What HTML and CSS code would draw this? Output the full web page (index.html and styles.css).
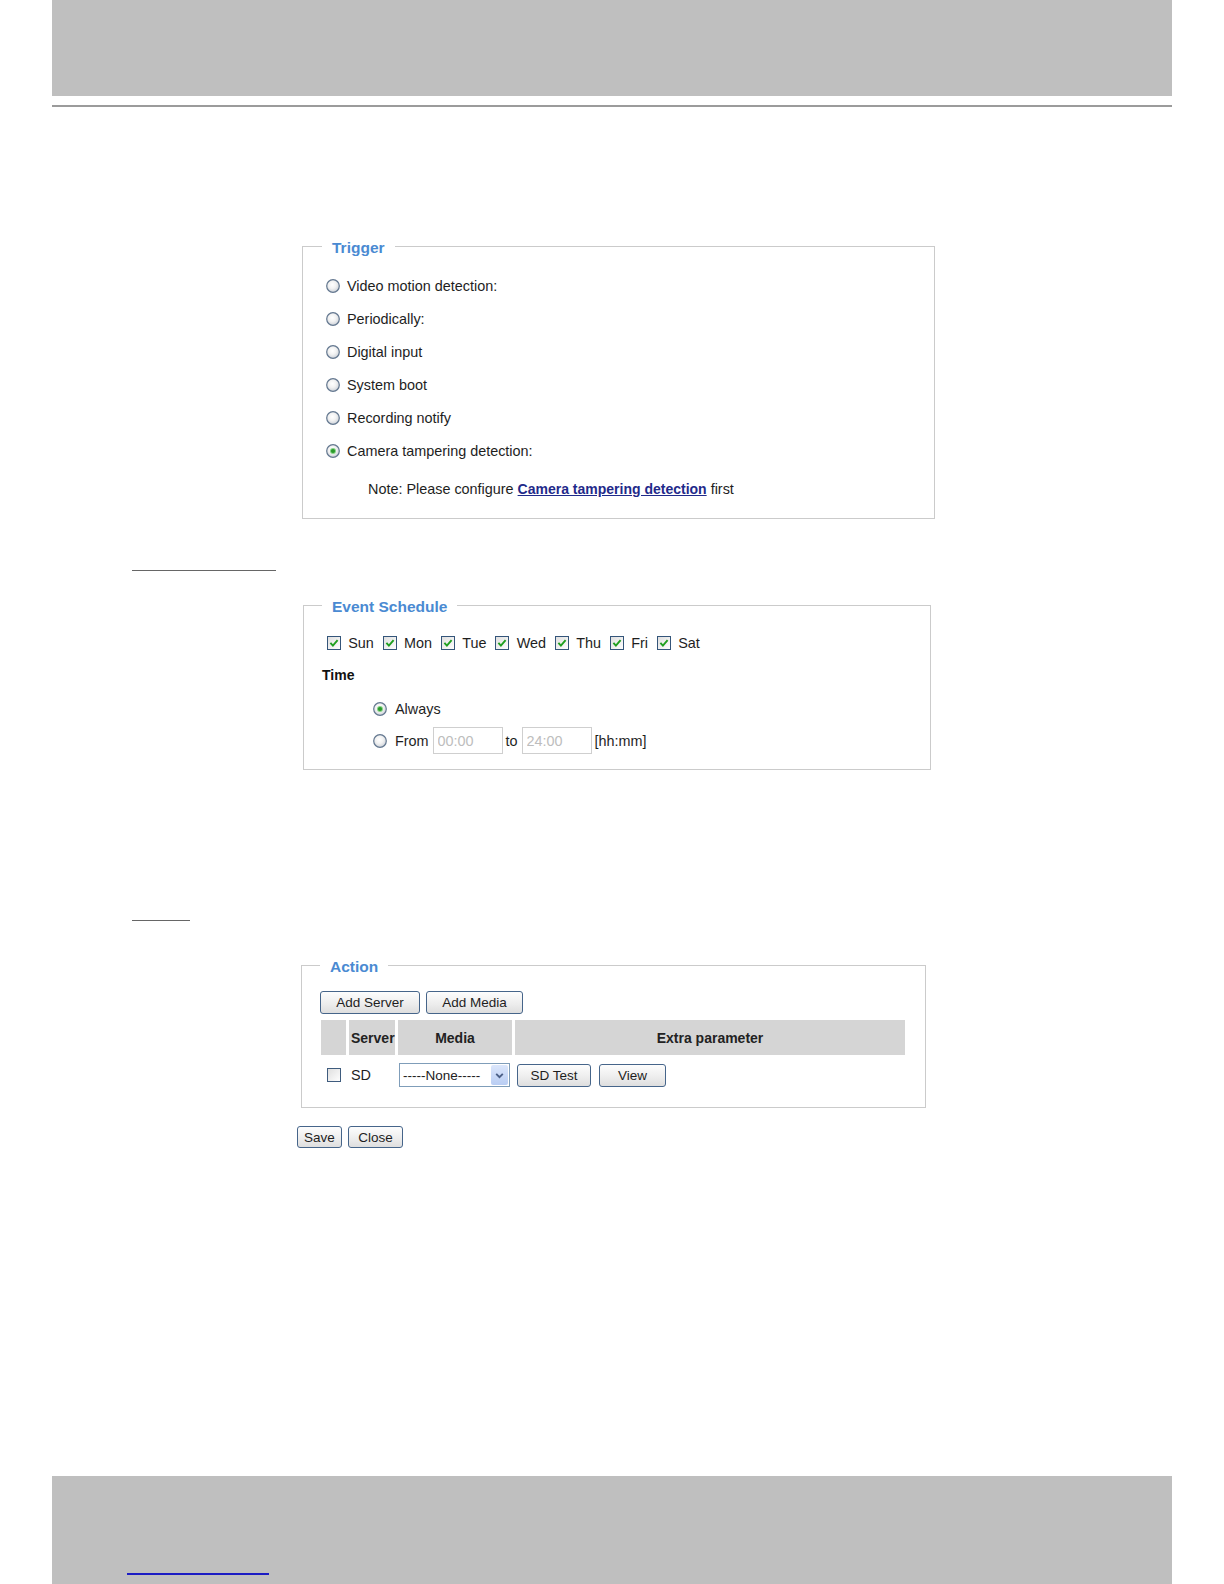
FILE: index.html
```html
<!DOCTYPE html>
<html lang="en">
<head>
    <meta charset="UTF-8">
    <meta name="viewport" content="width=device-width, initial-scale=1.0">
    <title>Event Settings</title>
    <link rel="stylesheet" href="styles.css">
</head>
<body>
    <!-- shared icon symbols -->
    <svg class="sprite" aria-hidden="true">
        <defs>
            <radialGradient id="radio-fill" cx="45%" cy="40%" r="60%">
                <stop offset="0" stop-color="#ffffff"/>
                <stop offset="0.5" stop-color="#f2f2f2"/>
                <stop offset="1" stop-color="#cdd2d9"/>
            </radialGradient>
            <linearGradient id="box-fill" x1="0" y1="0" x2="1" y2="1">
                <stop offset="0" stop-color="#dedede"/>
                <stop offset="1" stop-color="#ffffff"/>
            </linearGradient>
            <symbol id="radio-off" viewBox="0 0 14 14">
                <circle cx="7" cy="7" r="6.3" fill="url(#radio-fill)" stroke="#63778f" stroke-width="1.2"/>
            </symbol>
            <symbol id="radio-on" viewBox="0 0 14 14">
                <circle cx="7" cy="7" r="6.3" fill="url(#radio-fill)" stroke="#63778f" stroke-width="1.2"/>
                <circle cx="7" cy="7" r="3" fill="#86d386"/>
                <circle cx="7" cy="7" r="2.1" fill="#2a9a2a"/>
            </symbol>
            <symbol id="check-on" viewBox="0 0 14 14">
                <rect x="0.5" y="0.5" width="13" height="13" fill="url(#box-fill)" stroke="#34557a"/>
                <path d="M3.4 6.9 L5.9 9.6 L10.6 4.2" fill="none" stroke="#1f9f1f" stroke-width="1.9"/>
            </symbol>
            <symbol id="check-off" viewBox="0 0 14 14">
                <rect x="0.5" y="0.5" width="13" height="13" fill="url(#box-fill)" stroke="#3f5c7e"/>
            </symbol>
        </defs>
    </svg>

    <header class="page-head"></header>
    <div class="head-rule"></div>

    <main class="content">
        <fieldset class="box box-trigger">
            <legend>Trigger</legend>
            <ul class="trigger-list">
                <li><svg class="radio"><use href="#radio-off"/></svg>Video motion detection:</li>
                <li><svg class="radio"><use href="#radio-off"/></svg>Periodically:</li>
                <li><svg class="radio"><use href="#radio-off"/></svg>Digital input</li>
                <li><svg class="radio"><use href="#radio-off"/></svg>System boot</li>
                <li><svg class="radio"><use href="#radio-off"/></svg>Recording notify</li>
                <li><svg class="radio"><use href="#radio-on"/></svg>Camera tampering detection:</li>
            </ul>
            <p class="note">Note: Please configure <a href="#">Camera tampering detection</a> first</p>
        </fieldset>

        <div class="section-rule section-rule-schedule"></div>

        <fieldset class="box box-schedule">
            <legend>Event Schedule</legend>
            <div class="days">
                <span class="day"><svg class="check"><use href="#check-on"/></svg>Sun</span>
                <span class="day"><svg class="check"><use href="#check-on"/></svg>Mon</span>
                <span class="day"><svg class="check"><use href="#check-on"/></svg>Tue</span>
                <span class="day"><svg class="check"><use href="#check-on"/></svg>Wed</span>
                <span class="day"><svg class="check"><use href="#check-on"/></svg>Thu</span>
                <span class="day"><svg class="check"><use href="#check-on"/></svg>Fri</span>
                <span class="day"><svg class="check"><use href="#check-on"/></svg>Sat</span>
            </div>
            <div class="time-title">Time</div>
            <div class="time-opt">
                <svg class="radio"><use href="#radio-on"/></svg>Always
            </div>
            <div class="time-opt time-range">
                <svg class="radio"><use href="#radio-off"/></svg>From
                <input class="time-input" type="text" value="00:00" readonly>
                to
                <input class="time-input" type="text" value="24:00" readonly>
                [hh:mm]
            </div>
        </fieldset>

        <div class="section-rule section-rule-action"></div>

        <fieldset class="box box-action">
            <legend>Action</legend>
            <div class="btn-row">
                <button class="btn btn-server">Add Server</button>
                <button class="btn btn-media">Add Media</button>
            </div>
            <table class="media-table">
                <colgroup>
                    <col class="col-check">
                    <col class="col-server">
                    <col class="col-media">
                    <col class="col-extra">
                </colgroup>
                <thead>
                    <tr>
                        <th></th>
                        <th class="th-server">Server</th>
                        <th>Media</th>
                        <th>Extra parameter</th>
                    </tr>
                </thead>
                <tbody>
                    <tr>
                        <td class="td-check"><svg class="check"><use href="#check-off"/></svg></td>
                        <td class="td-server">SD</td>
                        <td class="td-media">
                            <div class="select-box">
                                <select>
                                    <option>-----None-----</option>
                                </select>
                                <span class="select-arrow">
                                    <svg viewBox="0 0 10 10"><path d="M2 3.5 L5 6.5 L8 3.5" fill="none" stroke="#4b5f86" stroke-width="1.7"/></svg>
                                </span>
                            </div>
                        </td>
                        <td class="td-extra">
                            <button class="btn btn-test">SD Test</button>
                            <button class="btn btn-view">View</button>
                        </td>
                    </tr>
                </tbody>
            </table>
        </fieldset>

        <div class="form-actions">
            <button class="btn btn-small btn-save">Save</button>
            <button class="btn btn-small btn-close">Close</button>
        </div>
    </main>

    <footer class="page-foot">
        <span class="foot-link"></span>
    </footer>
</body>
</html>
```

FILE: styles.css
```css
body {
    margin: 0;
    min-height: 100vh;
    display: flex;
    flex-direction: column;
    font-family: 'Liberation Sans', Arial, sans-serif;
    font-size: 14.4px;
    color: #1e1e1e;
    background-color: #fff;
}
.sprite {
    display: block;
    width: 0;
    height: 0;
    overflow: hidden;
}

/* page frame */
.page-head {
    height: 96px;
    margin: 0 52px;
    background-color: #bfbfbf;
}
.head-rule {
    margin: 9px 52px 0;
    border-top: 2px solid #9b9b9b;
}
.page-foot {
    margin: auto 52px 0;
    height: 108px;
    background-color: #bfbfbf;
    display: flex;
    align-items: flex-end;
}
.foot-link {
    width: 142px;
    margin: 0 0 9px 75px;
    border-bottom: 2px solid #1c1cc4;
}

/* fieldsets */
.box {
    box-sizing: border-box;
    margin: 0;
    border: 1px solid #cbcbcb;
    min-width: 0;
}
.box legend {
    padding: 3px 10px 0;
    line-height: 17px;
    font-size: 15.5px;
    font-weight: bold;
    color: #4a8ad2;
}
.box-trigger {
    width: 633px;
    margin: 129px 0 0 302px;
    padding: 13px 10px 12px 19px;
}
.box-schedule {
    width: 628px;
    margin: 24px 0 0 303px;
    padding: 16px 10px 15px 18px;
}
.box-action {
    width: 625px;
    margin: 34px 0 0 301px;
    padding: 16px 10px 12px 18px;
}

.section-rule {
    border-top: 1px solid #666;
    margin-left: 132px;
}
.section-rule-schedule {
    width: 144px;
    margin-top: 51px;
}
.section-rule-action {
    width: 58px;
    margin-top: 150px;
}

/* icons */
.radio, .check {
    width: 14px;
    height: 14px;
    flex: none;
}

/* trigger */
.trigger-list {
    list-style: none;
    margin: 0 0 0 4px;
    padding: 0;
}
.trigger-list li {
    display: flex;
    align-items: center;
    height: 33px;
}
.trigger-list .radio {
    margin-right: 7px;
}
.note {
    margin: 6px 0 0 46px;
    line-height: 33px;
}
.note a {
    color: #1f2a8a;
    font-size: 14px;
    font-weight: bold;
}

/* schedule */
.days {
    display: flex;
    align-items: center;
    height: 24px;
    margin-left: 5px;
}
.day {
    display: flex;
    align-items: center;
    margin-right: 9px;
}
.day .check {
    margin-right: 7.2px;
}
.time-title {
    margin-top: 8px;
    line-height: 24px;
    font-size: 14px;
    font-weight: bold;
    color: #111;
}
.time-opt {
    display: flex;
    align-items: center;
    height: 24px;
    margin: 10px 0 0 51px;
}
.time-opt .radio {
    margin-right: 8px;
}
.time-range {
    height: 27px;
    margin-top: 6px;
}
.time-input {
    box-sizing: border-box;
    width: 70px;
    height: 27px;
    margin: 0 3px 0 4px;
    padding: 0 4px;
    border: 1px solid #cfcfcf;
    font-family: inherit;
    font-size: 14.4px;
    color: #bdbdbd;
    outline: none;
}

/* buttons */
.btn {
    box-sizing: border-box;
    height: 23px;
    padding: 0;
    border: 1px solid #46658a;
    border-radius: 3px;
    background: linear-gradient(#fdfdfd, #ececec 60%, #dedede);
    font-family: 'Liberation Sans', Arial, sans-serif;
    font-size: 13.5px;
    color: #1e1e1e;
    text-align: center;
}
.btn-small {
    height: 22px;
}
.btn-server { width: 100px; }
.btn-media { width: 97px; }
.btn-test { width: 74px; }
.btn-view { width: 67px; margin-left: 4px; }
.btn-save { width: 45px; }
.btn-close { width: 55px; }

.btn-row {
    display: flex;
    gap: 6px;
}

/* action table */
.media-table {
    width: 590px;
    margin: 3px 0 0 -2px;
    border-spacing: 3px;
    table-layout: fixed;
}
.col-check { width: 25px; }
.col-server { width: 46px; }
.col-media { width: 114px; }
.media-table th {
    height: 35px;
    padding: 0;
    background-color: #d5d5d5;
    font-size: 14px;
    font-weight: bold;
    color: #222;
}
.media-table th.th-server {
    text-align: left;
    padding-left: 2px;
}
.media-table td {
    height: 34px;
    padding: 0;
    vertical-align: middle;
}
.td-check {
    text-align: center;
}
.td-check .check {
    display: block;
    margin: 0 auto;
}
.media-table .td-server {
    padding-left: 2px;
}
.media-table .td-media {
    padding-left: 1px;
}
.media-table .td-extra {
    padding-left: 2px;
}

.select-box {
    position: relative;
    width: 111px;
    height: 24px;
}
.select-box select {
    appearance: none;
    box-sizing: border-box;
    width: 100%;
    height: 100%;
    margin: 0;
    padding: 0 0 0 3px;
    border: 1px solid #7f9db9;
    border-radius: 0;
    background-color: #fff;
    font-family: 'Liberation Sans', Arial, sans-serif;
    font-size: 13.5px;
    color: #222;
}
.select-arrow {
    position: absolute;
    top: 2px;
    right: 2px;
    width: 17px;
    height: 20px;
    display: flex;
    align-items: center;
    justify-content: center;
    background: linear-gradient(#dbe6fb, #b9cdf3);
    border-radius: 2px;
    pointer-events: none;
}
.select-arrow svg {
    width: 11px;
    height: 11px;
}

.form-actions {
    display: flex;
    gap: 6px;
    margin: 18px 0 0 297px;
}
```
